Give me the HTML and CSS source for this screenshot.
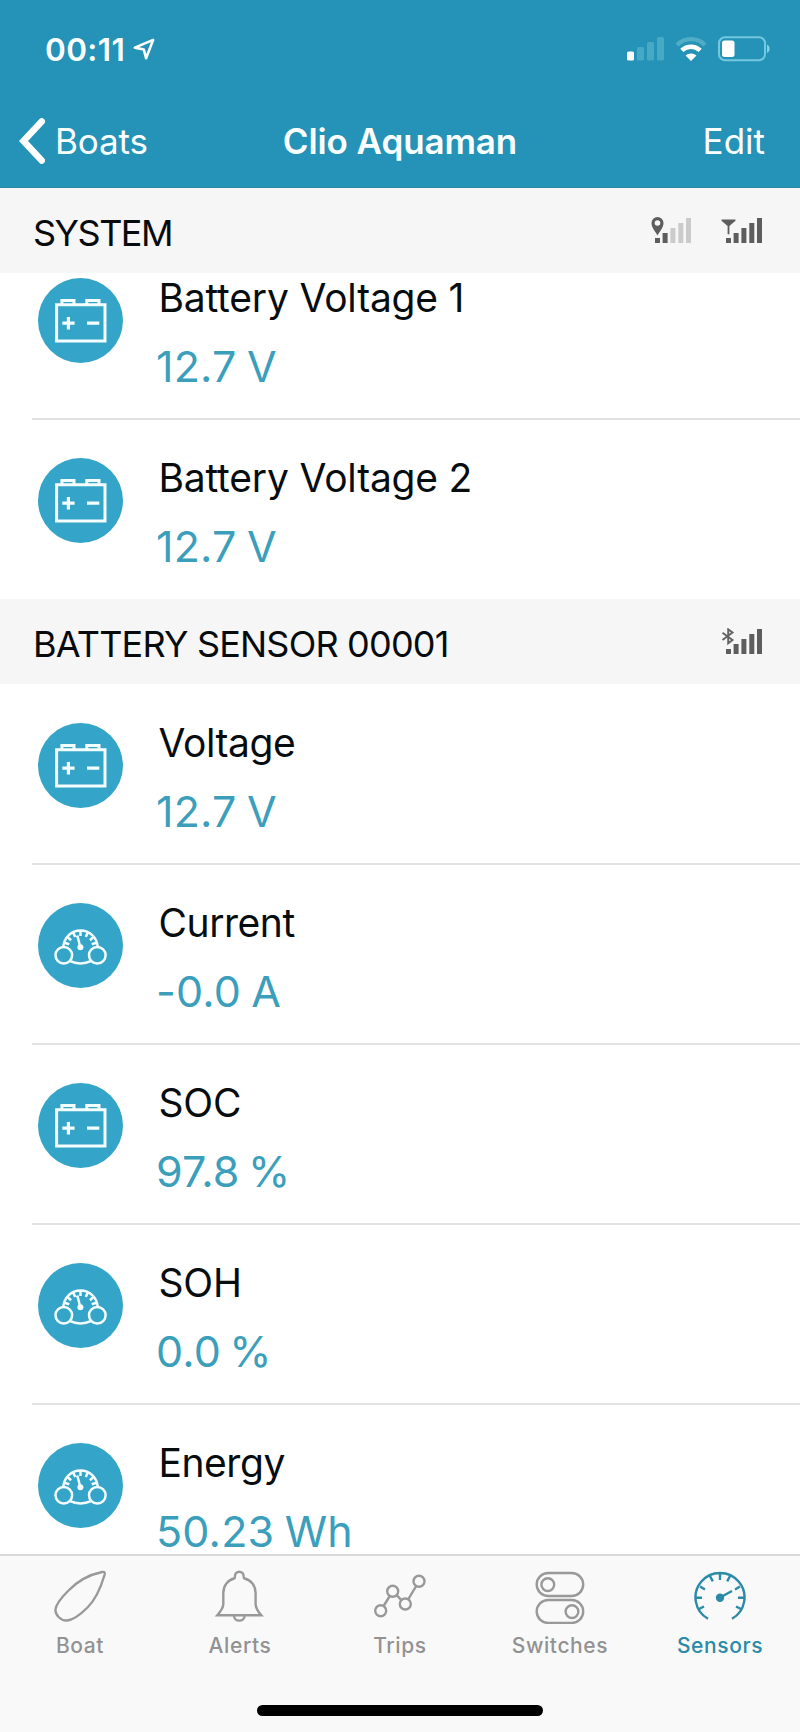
FILE: index.html
```html
<!DOCTYPE html>
<html lang="en">
<head>
<meta charset="utf-8">
<title>Clio Aquaman</title>
<link rel="stylesheet" href="styles.css">
</head>
<body>
<svg class="sprite" aria-hidden="true">
  <symbol id="battery" viewBox="0 0 85 85">
    <circle class="disc" cx="42.5" cy="42.5" r="42.5"/>
    <g fill="none" stroke="#f4fdff" stroke-width="3">
      <path d="M18.6 26.7H67V63H18.6ZM23.9 26.7V22.4H36V26.7M48.8 26.7V22.4H61V26.7"/>
      <path stroke-width="3.2" d="M24.3 45.2H36.6M30.4 39V51.4M49 45.2H61.3"/>
    </g>
  </symbol>
  <symbol id="gauge" viewBox="0 0 85 85">
    <circle class="disc" cx="42.5" cy="42.5" r="42.5"/>
    <g fill="none" stroke="#f4fdff" stroke-width="2.5">
      <circle cx="25.8" cy="52.3" r="8.3"/>
      <circle cx="59.3" cy="52.3" r="8.3"/>
      <path d="M25.2 44C26.1 34.3 33.4 27.4 42.5 27.4S58.9 34.3 59.8 44M32.3 58.2C38 61.2 47 61.2 52.7 58.2"/>
      <path d="M42.5 28v5M35.2 29.4l2 4.5M49.8 29.4l-2 4.5M29.5 34l3.6 3.2M55.5 34l-3.6 3.2M26.3 39.8l5 1.5M58.7 39.8l-5 1.5M39.3 32.5l3 11.5"/>
    </g>
    <circle cx="42.4" cy="44.3" r="3" fill="#f4fdff"/>
  </symbol>
  <symbol id="bars" viewBox="0 0 41 27">
    <path d="M5 21h5v5H5zM12.6 16h5v10h-5z"/>
    <path class="upper" d="M20.4 11h5v15h-5zM28.3 6h5v20h-5zM36 1h5v25h-5z"/>
  </symbol>
</svg>
<div class="phone">
  <header class="header">
    <div class="status">
      <span class="time">00:11</span>
      <svg class="location" viewBox="0 0 24 24"><path d="M22 2 2 10.5 11.7 12.5 14.3 22Z" fill="none" stroke="#fff" stroke-width="2.8" stroke-linejoin="round"/></svg>
      <svg class="cell" viewBox="0 0 37 24">
        <rect y="14.5" width="7" height="9" rx="1.5" fill="#fff"/>
        <g fill="#47a9c3"><rect x="10" y="10" width="7" height="13.5" rx="1.5"/><rect x="20" y="5" width="7" height="18.5" rx="1.5"/><rect x="30" width="7" height="23.5" rx="1.5"/></g>
      </svg>
      <svg class="wifi" viewBox="0 0 32 24" fill="none" stroke-width="4.2">
        <path d="M2 8C10 .2 22 .2 30 8" stroke="#51adc6"/>
        <path d="M6.8 13.4c5.3-4.9 13.1-4.9 18.4 0" stroke="#fff" stroke-width="4.6"/>
        <path d="M10.5 18.6c3-2.8 8-2.8 11 0L16 24Z" fill="#fff"/>
      </svg>
      <svg class="power" viewBox="0 0 52 26">
        <rect x="1" y="1.2" width="46" height="23" rx="6" fill="none" stroke="#74c8e0" stroke-width="2"/>
        <rect x="4" y="4.5" width="12.5" height="16.5" rx="2.5" fill="#fff"/>
        <path d="M49 8.5c3.6 1.6 3.6 6.8 0 8.4Z" fill="#83cfe3"/>
      </svg>
    </div>
    <nav class="nav">
      <a class="back"><svg class="chevron" viewBox="0 0 27 46"><path d="M23.7 3.5 5.5 23 23.7 42.500" fill="none" stroke="#fff" stroke-width="6.6" stroke-linecap="round"/></svg><span>Boats</span></a>
      <h1 class="title">Clio Aquaman</h1>
      <a class="edit">Edit</a>
    </nav>
  </header>
  <main class="list">
    <div class="section">
      <h2 class="heading system">SYSTEM</h2>
      <svg class="signal weak" viewBox="0 0 41 27"><use href="#bars" width="41" height="27"/><path fill-rule="evenodd" d="M7.5 0A6 6 0 0 0 1.5 6C1.5 10.5 5 14 7.5 18.5 10 14 13.5 10.5 13.5 6A6 6 0 0 0 7.5 0ZM7.5 3.2A2.8 2.8 0 1 1 7.5 8.8A2.8 2.8 0 0 1 7.5 3.2Z"/></svg>
      <svg class="signal" viewBox="0 0 41 27"><use href="#bars" width="41" height="27"/><path d="M.5 2.5h14v1.2L8.4 9v8.3H6.6V9L.5 3.7Z"/></svg>
    </div>
    <div class="row scrolled"><svg class="icon"><use href="#battery"/></svg><div class="info"><div class="name">Battery Voltage 1</div><div class="value">12.7 V</div></div></div>
    <div class="row last"><svg class="icon"><use href="#battery"/></svg><div class="info"><div class="name">Battery Voltage 2</div><div class="value">12.7 V</div></div></div>
    <div class="section sensor">
      <h2 class="heading">BATTERY SENSOR 00001</h2>
      <svg class="signal" viewBox="0 0 41 27"><use href="#bars" width="41" height="27"/><path d="M1.5 4.7 11.5 12 7.2 15.3V1.3L11.5 4.5 1.5 12" fill="none" stroke="#636363" stroke-width="1.9"/></svg>
    </div>
    <div class="row"><svg class="icon"><use href="#battery"/></svg><div class="info"><div class="name short">Voltage</div><div class="value">12.7 V</div></div></div>
    <div class="row"><svg class="icon"><use href="#gauge"/></svg><div class="info"><div class="name short">Current</div><div class="value">-0.0 A</div></div></div>
    <div class="row"><svg class="icon"><use href="#battery"/></svg><div class="info"><div class="name">SOC</div><div class="value percent">97.8 %</div></div></div>
    <div class="row"><svg class="icon"><use href="#gauge"/></svg><div class="info"><div class="name">SOH</div><div class="value percent">0.0 %</div></div></div>
    <div class="row"><svg class="icon"><use href="#gauge"/></svg><div class="info"><div class="name short">Energy</div><div class="value">50.23 Wh</div></div></div>
  </main>
  <footer class="footer">
    <div class="tabs">
      <a class="tab"><svg class="glyph" viewBox="0 0 52 54"><path d="M48 2C51 1.5 51 3 50.5 5 47 17 42 29 33.5 37.5 27 44 20 50 13 50.5 7 51 1 45 1.5 39.5 2 34 8 27 14 21 24 10.5 36 4.5 48 2Z"/></svg><span>Boat</span></a>
      <a class="tab"><svg class="glyph" viewBox="0 0 52 54"><path d="M3.3 45.3C7 41 9.3 38 9.3 34V23C9.3 15.5 14 10 20 8.5 20.8 8.3 21 7.5 21 6A4.3 4.3 0 0 1 29.6 6C29.6 7.5 29.8 8.3 30.6 8.5 37 10 41.6 15.5 41.6 23V34C41.6 38 43.5 41 47.3 45.3ZM20 46A5.3 4.6 0 0 0 30.6 46"/></svg><span>Alerts</span></a>
      <a class="tab"><svg class="glyph" viewBox="0 0 52 54"><circle cx="6.7" cy="40.7" r="5.5"/><circle cx="18.7" cy="21.3" r="5.5"/><circle cx="31.3" cy="34" r="5.5"/><circle cx="45" cy="11.3" r="5.5"/><path d="M9.6 36 15.8 26M22.6 25.2 27.4 30.1M34.2 29.3 42.2 16"/></svg><span>Trips</span></a>
      <a class="tab"><svg class="glyph" viewBox="0 0 52 54"><rect x="2.7" y="3" width="46.5" height="23" rx="11.5"/><rect x="2.7" y="30" width="46.5" height="23" rx="11.5"/><circle cx="13.8" cy="14.6" r="6.4"/><circle cx="38" cy="41.6" r="6.4"/></svg><span>Switches</span></a>
      <a class="tab active"><svg class="glyph" viewBox="0 0 52 54"><path d="M14 48.8A24.5 24.5 0 1 1 38 48.8M26 3v7M15.8 5.8l3 5.6M36.2 5.8l-3 5.6M6 16.5l5 3M46 16.5l-5 3M1.5 27.7H8M50.5 27.7H44M4 39.5l6-3M48 39.5l-6-3M26 27.5 38 21"/><circle cx="26" cy="27.7" r="3" fill="#2a8aa7"/></svg><span>Sensors</span></a>
    </div>
    <div class="home"></div>
  </footer>
</div>
</body>
</html>
```
FILE: styles.css
```css
* { box-sizing: border-box; }
body { margin: 0; font-family: Inter, "Liberation Sans", sans-serif; }
.sprite { position: absolute; width: 0; height: 0; }
.disc { fill: #34a5c8; }
.phone { width: 800px; height: 1732px; display: flex; flex-direction: column; overflow: hidden; background: #fff; }
.header { flex: none; height: 188px; background: #2592b7; border-bottom: 1px solid #2d87a0; color: #fbffff; }
.status { height: 96px; display: flex; align-items: center; padding: 2px 30px 0 45px; }
.time { width: 88px; font-size: 31.5px; font-weight: 600; letter-spacing: .4px; }
.location { width: 22px; height: 22px; }
.cell { width: 37px; height: 24px; margin-left: auto; }
.wifi { width: 32px; height: 24px; margin-left: 11px; }
.power { width: 52px; height: 26px; margin-left: 11px; }
.nav { height: 89px; display: grid; grid-template-columns: 1fr auto 1fr; align-items: center; padding: 0 35px 0 18px; font-size: 35px; }
.back { display: flex; align-items: center; gap: 10px; letter-spacing: -.1px; }
.chevron { width: 27px; height: 46px; }
.title { margin: 0 0 0 -17px; font-size: 35px; font-weight: 600; letter-spacing: -.1px; transform: translateX(17px); }
.edit { text-align: right; }
.list { flex: 1; min-height: 0; overflow: hidden; }
.section { position: relative; z-index: 1; height: 85px; display: flex; align-items: center; gap: 30px; padding: 0 38px 0 33px; background: #f6f6f6; }
.sensor { margin-bottom: 1px; }
.heading { margin: 5px auto 0 0; color: #080b0d; font-size: 36px; font-weight: 400; letter-spacing: -.8px; }
.system { letter-spacing: -1.5px; }
.signal { width: 41px; height: 27px; fill: #5d5d5d; }
.weak { --upper: #cbcbcb; }
.upper { fill: var(--upper, #5d5d5d); }
.row { height: 180px; display: flex; margin-left: 32px; padding-left: 6px; border-bottom: 2px solid #e2e2e2; }
.scrolled { margin-top: -33px; }
.last { height: 179px; border-bottom: 0; }
.icon { flex: none; width: 85px; height: 85px; margin-top: 38px; }
.info { padding: 34px 0 0 35.5px; white-space: nowrap; }
.name { height: 48px; line-height: 48px; color: #070d0f; font-size: 39px; letter-spacing: -.2px; }
.short { letter-spacing: -.45px; }
.value { height: 36px; margin: 26px 0 0 -2.5px; line-height: 36px; color: #3b9fbc; font-size: 43px; letter-spacing: .2px; word-spacing: -2px; }
.percent { word-spacing: -4px; }
.footer { flex: none; height: 178px; border-top: 2px solid #d9d9d9; background: #f9f9f9; }
.tabs { display: grid; grid-template-columns: repeat(5, 1fr); height: 149px; padding-top: 14px; }
.tab { display: flex; flex-direction: column; align-items: center; gap: 8px; color: #929292; font-size: 21px; line-height: 28px; font-weight: 500; letter-spacing: .6px; }
.glyph { width: 52px; height: 54px; fill: none; stroke: #999; stroke-width: 2.4; }
.active { color: #2a8aa7; }
.active .glyph { stroke: #2a8aa7; }
.home { width: 286px; height: 11px; margin: 0 auto; border-radius: 6px; background: #000; }
```
